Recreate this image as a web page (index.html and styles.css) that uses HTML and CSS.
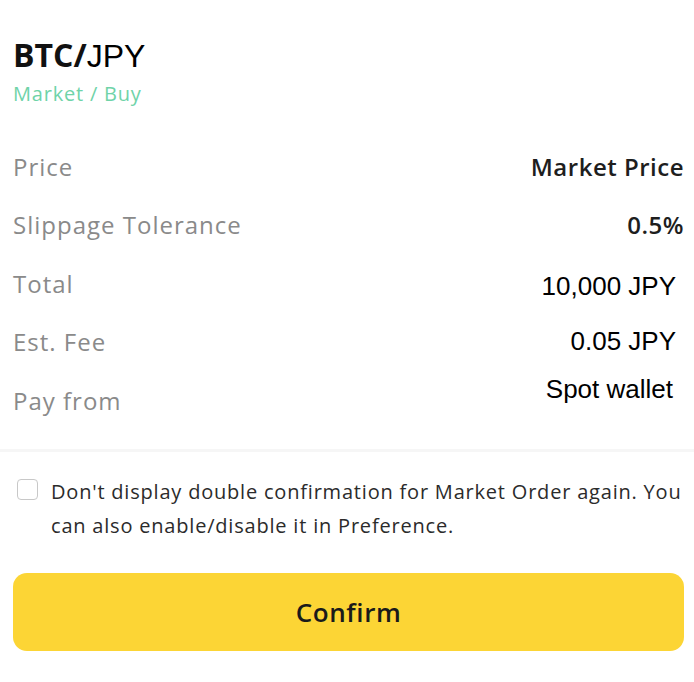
FILE: index.html
```html
<!DOCTYPE html>
<html lang="en">

<head>
    <meta charset="UTF-8">
    <meta name="viewport" content="width=device-width, initial-scale=1.0">
    <title>Confirm Order</title>
    <link rel="stylesheet" href="styles.css">
</head>

<body>
    <div class="sheet">
        <div class="header">
            <h1 class="pair"><strong>BTC/</strong>JPY</h1>
            <div class="side">Market / Buy</div>
        </div>

        <div class="details">
            <div class="row">
                <span class="label">Price</span>
                <span class="value bold">Market Price</span>
            </div>
            <div class="row">
                <span class="label">Slippage Tolerance</span>
                <span class="value bold">0.5%</span>
            </div>
            <div class="row">
                <span class="label">Total</span>
                <span class="value plain low">10,000 JPY</span>
            </div>
            <div class="row">
                <span class="label">Est. Fee</span>
                <span class="value plain">0.05 JPY</span>
            </div>
            <div class="row">
                <span class="label">Pay from</span>
                <span class="value plain high">Spot wallet</span>
            </div>
        </div>
    </div>

    <div class="divider"></div>

    <div class="sheet">
        <label class="remember">
            <span class="checkbox"></span>
            <span>Don't display double confirmation for Market Order again. You can also enable/disable it in Preference.</span>
        </label>
        <button class="confirm">Confirm</button>
    </div>
</body>

</html>
```

FILE: styles.css
```css
body {
    margin: 0;
    background: #fff;
    font-family: "Open Sans", Lato, sans-serif;
    color: #1e2329;
}

.sheet {
    padding: 0 10px 0 13px;
}

.header {
    padding-top: 37px;
}

.pair {
    margin: 0;
    font-family: "Liberation Sans", Arial, sans-serif;
    font-size: 32px;
    font-weight: normal;
    line-height: 36px;
    color: #000;
}

.pair strong {
    font-family: "Open Sans", sans-serif;
    font-weight: 700;
    letter-spacing: 0;
    color: #111;
}

.side {
    margin-top: 6px;
    font-size: 20px;
    line-height: 28px;
    letter-spacing: 0.8px;
    color: #6fd3a8;
}

.details {
    margin-top: 29px;
}

.row {
    display: flex;
    justify-content: space-between;
    align-items: center;
    height: 58.5px;
}

.label {
    font-size: 24px;
    letter-spacing: 1px;
    color: #8a8a8a;
}

.value {
    font-size: 24px;
}

.bold {
    font-weight: 600;
    letter-spacing: 0.5px;
    color: #1e1e1e;
}

.plain {
    font-family: "Liberation Sans", Arial, sans-serif;
    font-size: 26px;
    color: #000;
    padding-right: 8px;
}

.low {
    margin-top: 6px;
}

.high {
    margin-bottom: 22px;
    padding-right: 11px;
}

.divider {
    margin-top: 19px;
    height: 3px;
    background: #f6f6f6;
}

.remember {
    display: flex;
    align-items: flex-start;
    gap: 13px;
    margin-top: 23px;
    padding-left: 4px;
    font-size: 20px;
    line-height: 34px;
    letter-spacing: 0.8px;
    color: #2b2b2b;
}

.checkbox {
    flex: none;
    width: 19px;
    height: 19px;
    margin-top: 4px;
    border: 1.5px solid #c8c8c8;
    border-radius: 4px;
}

.confirm {
    display: block;
    width: 100%;
    height: 78px;
    margin-top: 30px;
    border: none;
    border-radius: 14px;
    background: #fcd535;
    font-family: "Open Sans", sans-serif;
    font-size: 26px;
    font-weight: 600;
    letter-spacing: 0.6px;
    color: #1a1a1a;
}
```
